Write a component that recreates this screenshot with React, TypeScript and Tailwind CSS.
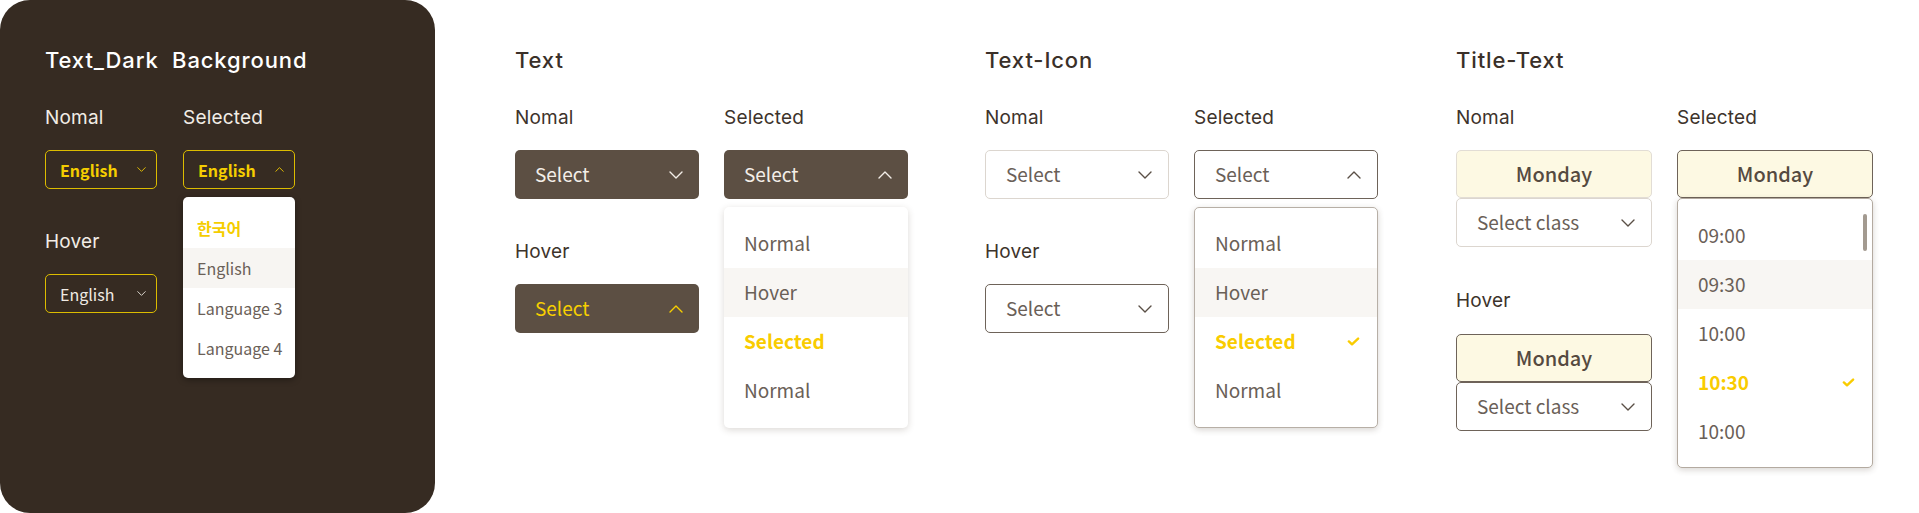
import React from 'react'

type Item = { label: string; state?: 'hover' | 'selected' }

function Chevron({ up, className }: { up?: boolean; className?: string }) {
  return (
    <svg viewBox="0 0 14 8" fill="none" stroke="currentColor" strokeWidth={1.4} strokeLinecap="round" strokeLinejoin="round" className={className}>
      <path d={up ? 'M1 7L7 1L13 7' : 'M1 1L7 7L13 1'} />
    </svg>
  )
}

function Check({ className }: { className?: string }) {
  return (
    <svg viewBox="0 0 12 9" fill="none" stroke="currentColor" strokeWidth={2.4} strokeLinecap="round" strokeLinejoin="round" className={className}>
      <path d="M1.4 4.4L4.5 7.3L10.6 1.6" />
    </svg>
  )
}

function Title({ children, dark }: { children: React.ReactNode; dark?: boolean }) {
  return (
    <div
      className={`font-['Inter',sans-serif] font-medium text-[22px] leading-[22px] tracking-[0.04em] whitespace-pre ${
        dark ? 'text-white' : 'text-[#3a3029]'
      }`}
    >
      {children}
    </div>
  )
}

function Label({ children, dark, className = '' }: { children: React.ReactNode; dark?: boolean; className?: string }) {
  return (
    <div
      className={`font-['Inter',sans-serif] text-[19px] leading-[19px] tracking-[0.01em] ${dark ? 'text-[#f2ede6]' : 'text-[#3d332b]'} ${className}`}
    >
      {children}
    </div>
  )
}

const sans = "font-['Noto_Sans_CJK_KR','Noto_Sans',sans-serif]"

// Dark background variant
function DarkSelect({ up, yellow }: { up?: boolean; yellow?: boolean }) {
  return (
    <div className={`h-[39px] rounded-[5px] border-[1.5px] border-[#dcbc00] flex items-center justify-between pl-[14px] pr-[10px] ${sans}`}>
      <span className={`text-[16px] ${yellow ? 'font-semibold text-[#f5cd00]' : 'text-[#f0ebe4]'}`}>English</span>
      <Chevron up={up} className={`w-[9px] h-[5px] ${yellow ? 'text-[#f5cd00]' : 'text-[#f0ebe4]'}`} />
    </div>
  )
}

function DarkPanel() {
  const langs: Item[] = [{ label: '한국어', state: 'selected' }, { label: 'English', state: 'hover' }, { label: 'Language 3' }, { label: 'Language 4' }]
  return (
    <div className="w-[435px] h-[513px] shrink-0 rounded-[30px] bg-[#362b22] pl-[45px] pt-[49px]">
      <Title dark>{'Text_Dark  Background'}</Title>
      <div className="flex gap-[26px] mt-[37px]">
        <div className="w-[112px] flex flex-col">
          <Label dark>Nomal</Label>
          <div className="mt-[23px]">
            <DarkSelect yellow />
          </div>
          <Label dark className="mt-[43px]">
            Hover
          </Label>
          <div className="mt-[23px]">
            <DarkSelect />
          </div>
        </div>
        <div className="w-[112px] flex flex-col">
          <Label dark>Selected</Label>
          <div className="mt-[23px]">
            <DarkSelect up yellow />
          </div>
          <div className={`mt-[8px] h-[181px] rounded-[5px] bg-white shadow-[0_2px_6px_rgba(0,0,0,0.35)] pt-[11px] ${sans}`}>
            {langs.map((it) => (
              <div
                key={it.label}
                className={`h-[40px] flex items-center pl-[14px] text-[16px] ${
                  it.state === 'hover' ? 'bg-[#f7f5f2]' : ''
                } ${it.state === 'selected' ? 'font-semibold text-[#f5cd00]' : 'text-[#6a6057]'}`}
              >
                {it.label}
              </div>
            ))}
          </div>
        </div>
      </div>
    </div>
  )
}

function Rows({ items, check }: { items: Item[]; check?: boolean }) {
  return (
    <>
      {items.map((it, i) => (
        <div
          key={i}
          className={`h-[49px] flex items-center justify-between pl-[20px] pr-[17px] text-[19px] ${
            it.state === 'hover' ? 'bg-[#f8f6f3]' : ''
          } ${it.state === 'selected' ? 'font-semibold text-[#f9cc00]' : 'text-[#6a6057]'}`}
        >
          <span>{it.label}</span>
          {check && it.state === 'selected' && <Check className="w-[13px] h-[9px] text-[#f9cc00]" />}
        </div>
      ))}
    </>
  )
}

const stateItems: Item[] = [{ label: 'Normal' }, { label: 'Hover', state: 'hover' }, { label: 'Selected', state: 'selected' }, { label: 'Normal' }]

function BoxSelect({ box, text, up, label = 'Select', chevron }: { box: string; text: string; up?: boolean; label?: string; chevron: string }) {
  return (
    <div className={`h-[49px] rounded-[5px] flex items-center justify-between pl-[20px] pr-[16px] ${sans} ${box}`}>
      <span className={`text-[19px] ${text}`}>{label}</span>
      <Chevron up={up} className={`w-[14px] h-[8px] ${chevron}`} />
    </div>
  )
}

function TextSection() {
  return (
    <div className="ml-[80px] pt-[49px] shrink-0">
      <Title>Text</Title>
      <div className="flex gap-[25px] mt-[37px]">
        <div className="w-[184px] flex flex-col">
          <Label>Nomal</Label>
          <div className="mt-[23px]">
            <BoxSelect box="bg-[#5c4f43]" text="text-[#f3eee8]" chevron="text-[#f3eee8]" />
          </div>
          <Label className="mt-[43px]">Hover</Label>
          <div className="mt-[23px]">
            <BoxSelect box="bg-[#5c4f43]" text="text-[#f7cf00]" chevron="text-[#f7cf00]" up />
          </div>
        </div>
        <div className="w-[184px] flex flex-col">
          <Label>Selected</Label>
          <div className="mt-[23px]">
            <BoxSelect box="bg-[#5c4f43]" text="text-[#f3eee8]" chevron="text-[#f3eee8]" up />
          </div>
          <div className={`mt-[8px] rounded-[5px] bg-white shadow-[0_2px_7px_rgba(60,45,30,0.18)] pt-[12px] pb-[13px] ${sans}`}>
            <Rows items={stateItems} />
          </div>
        </div>
      </div>
    </div>
  )
}

function TextIconSection() {
  return (
    <div className="ml-[77px] pt-[49px] shrink-0">
      <Title>Text-Icon</Title>
      <div className="flex gap-[25px] mt-[37px]">
        <div className="w-[184px] flex flex-col">
          <Label>Nomal</Label>
          <div className="mt-[23px]">
            <BoxSelect box="bg-white border-[1.5px] border-[#dcd6cf]" text="text-[#6a6057]" chevron="text-[#5a4f46]" />
          </div>
          <Label className="mt-[43px]">Hover</Label>
          <div className="mt-[23px]">
            <BoxSelect box="bg-white border-[1.5px] border-[#6e6359]" text="text-[#6a6057]" chevron="text-[#5a4f46]" />
          </div>
        </div>
        <div className="w-[184px] flex flex-col">
          <Label>Selected</Label>
          <div className="mt-[23px]">
            <BoxSelect box="bg-white border-[1.5px] border-[#6e6359]" text="text-[#6a6057]" chevron="text-[#5a4f46]" up />
          </div>
          <div className={`mt-[8px] rounded-[5px] bg-white border border-[#b7afa6] shadow-[0_2px_6px_rgba(60,45,30,0.2)] pt-[11px] pb-[12px] ${sans}`}>
            <Rows items={stateItems} check />
          </div>
        </div>
      </div>
    </div>
  )
}

function Monday({ border }: { border: string }) {
  return (
    <div className={`h-[48px] rounded-[5px] bg-[#fdf9e3] border-[1.5px] ${border} flex items-center justify-center ${sans} text-[20px] font-medium text-[#554a40]`}>
      Monday
    </div>
  )
}

function TitleTextSection() {
  const times: Item[] = [{ label: '09:00' }, { label: '09:30', state: 'hover' }, { label: '10:00' }, { label: '10:30', state: 'selected' }, { label: '10:00' }]
  return (
    <div className="ml-[78px] pt-[49px] shrink-0">
      <Title>Title-Text</Title>
      <div className="flex gap-[25px] mt-[37px]">
        <div className="w-[196px] flex flex-col">
          <Label>Nomal</Label>
          <div className="mt-[23px]">
            <Monday border="border-[#e2ddd5]" />
            <BoxSelect box="bg-white border-[1.5px] border-[#dcd6cf]" text="text-[#6a6057]" chevron="text-[#5a4f46]" label="Select class" />
          </div>
          <Label className="mt-[44px]">Hover</Label>
          <div className="mt-[24px]">
            <Monday border="border-[#6e6359]" />
            <BoxSelect box="bg-white border-[1.5px] border-[#6e6359]" text="text-[#6a6057]" chevron="text-[#5a4f46]" label="Select class" />
          </div>
        </div>
        <div className="w-[196px] flex flex-col">
          <Label>Selected</Label>
          <div className="mt-[23px]">
            <Monday border="border-[#6e6359]" />
            <div className={`relative rounded-[5px] bg-white border border-[#b3aaa0] shadow-[0_2px_6px_rgba(60,45,30,0.2)] pt-[12px] pb-[11px] ${sans}`}>
              <div className="absolute right-[5px] top-[15px] w-[4px] h-[37px] rounded-full bg-[#a39a90]" />
              <Rows items={times} check />
            </div>
          </div>
        </div>
      </div>
    </div>
  )
}

export default function App() {
  return (
    <div className="w-[1919px] h-[513px] bg-white flex overflow-hidden">
      <DarkPanel />
      <TextSection />
      <TextIconSection />
      <TitleTextSection />
    </div>
  )
}
